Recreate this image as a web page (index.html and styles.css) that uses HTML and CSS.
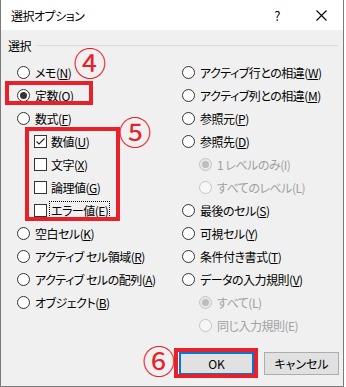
FILE: index.html
```html
<!DOCTYPE html>
<html lang="ja">
<head>
    <meta charset="UTF-8">
    <meta name="viewport" content="width=device-width, initial-scale=1.0">
    <title>選択オプション</title>
    <link rel="stylesheet" href="styles.css">
</head>
<body>
    <div class="dialog">
        <div class="title-bar">
            <span class="title">選択オプション</span>
            <span class="help">?</span>
            <span class="close">
                <svg width="11" height="11" viewBox="0 0 11 11"><path d="M0.5 0.5 L10.5 10.5 M10.5 0.5 L0.5 10.5" stroke="#000" stroke-width="1.1" fill="none"/></svg>
            </span>
        </div>

        <div class="content">
            <div class="group-label">
                <span>選択</span>
                <span class="rule"></span>
            </div>

            <div class="columns">
                <div class="column column-left">
                    <div class="option"><span class="radio"></span><span>メモ(<u>N</u>)</span></div>
                    <div class="option"><span class="radio checked"></span><span>定数(<u>O</u>)</span></div>
                    <div class="option"><span class="radio"></span><span>数式(<u>F</u>)</span></div>
                    <div class="option sub"><span class="checkbox checked"><svg width="11" height="11" viewBox="0 0 11 11"><path d="M1.5 5.5 L4 8 L9.5 2.5" stroke="#222" stroke-width="1.1" fill="none"/></svg></span><span>数値(<u>U</u>)</span></div>
                    <div class="option sub"><span class="checkbox"></span><span>文字(<u>X</u>)</span></div>
                    <div class="option sub"><span class="checkbox"></span><span>論理値(<u>G</u>)</span></div>
                    <div class="option sub"><span class="checkbox"></span><span class="focus">エラー値(<u>E</u>)</span></div>
                    <div class="option"><span class="radio"></span><span>空白セル(<u>K</u>)</span></div>
                    <div class="option"><span class="radio"></span><span>アクティブ セル領域(<u>R</u>)</span></div>
                    <div class="option"><span class="radio"></span><span>アクティブ セルの配列(<u>A</u>)</span></div>
                    <div class="option"><span class="radio"></span><span>オブジェクト(<u>B</u>)</span></div>
                </div>

                <div class="column">
                    <div class="option"><span class="radio"></span><span>アクティブ行との相違(<u>W</u>)</span></div>
                    <div class="option"><span class="radio"></span><span>アクティブ列との相違(<u>M</u>)</span></div>
                    <div class="option"><span class="radio"></span><span>参照元(<u>P</u>)</span></div>
                    <div class="option"><span class="radio"></span><span>参照先(<u>D</u>)</span></div>
                    <div class="option sub disabled"><span class="radio checked"></span><span>1 レベルのみ(I)</span></div>
                    <div class="option sub disabled"><span class="radio"></span><span>すべてのレベル(L)</span></div>
                    <div class="option"><span class="radio"></span><span>最後のセル(<u>S</u>)</span></div>
                    <div class="option"><span class="radio"></span><span>可視セル(<u>Y</u>)</span></div>
                    <div class="option"><span class="radio"></span><span>条件付き書式(<u>T</u>)</span></div>
                    <div class="option"><span class="radio"></span><span>データの入力規則(<u>V</u>)</span></div>
                    <div class="option sub disabled"><span class="radio checked"></span><span>すべて(L)</span></div>
                    <div class="option sub disabled"><span class="radio"></span><span>同じ入力規則(E)</span></div>
                </div>
            </div>

            <div class="buttons">
                <button class="btn btn-ok">OK</button>
                <button class="btn">キャンセル</button>
            </div>
        </div>

        <!-- red annotations drawn over the dialog -->
        <div class="mark-box box-const"></div>
        <div class="mark-box box-types"></div>
        <div class="mark-box box-ok"></div>
        <span class="mark-num num-4">④</span>
        <span class="mark-num num-5">⑤</span>
        <span class="mark-num num-6">⑥</span>
    </div>
</body>
</html>
```

FILE: styles.css
```css
* {
    box-sizing: border-box;
}

body {
    margin: 0;
    background-color: #fff;
    font-family: "Noto Sans CJK JP", "Noto Sans", sans-serif;
    font-size: 12px;
    font-feature-settings: "palt";
    letter-spacing: -0.5px;
    color: #000;
}

.dialog {
    position: relative;
    width: 344px;
    height: 387px;
    border-left: 1px solid #7a7a7a;
    border-right: 1px solid #7a7a7a;
    border-bottom: 1px solid #7a7a7a;
}

/* title bar */
.title-bar {
    display: flex;
    align-items: center;
    height: 30px;
    padding: 0 16px 0 10px;
    background: #fff;
}

.title {
    flex: 1;
}

.help {
    font-size: 13px;
}

.close {
    display: flex;
    margin-left: 36px;
}

/* dialog body */
.content {
    height: 356px;
    padding-top: 7px;
    background-color: #f0f0f0;
}

.group-label {
    display: flex;
    align-items: center;
    gap: 5px;
    height: 16px;
    padding: 0 5px 0 7px;
}

.group-label .rule {
    flex: 1;
    height: 1px;
    background-color: #dcdcdc;
}

.columns {
    display: flex;
    margin-top: 8px;
    padding-left: 16px;
}

.column-left {
    width: 165px;
}

.option {
    display: flex;
    align-items: center;
    height: 23px;
    white-space: nowrap;
}

.option.sub {
    padding-left: 17px;
}

.option.disabled {
    color: #a0a0a0;
}

.radio {
    position: relative;
    flex: none;
    width: 13px;
    height: 13px;
    margin-right: 5px;
    border: 1px solid #333;
    border-radius: 50%;
    background: #fff;
}

.radio.checked::after {
    content: "";
    position: absolute;
    top: 2px;
    left: 2px;
    width: 7px;
    height: 7px;
    border-radius: 50%;
    background: #333;
}

.disabled .radio {
    border-color: #c4c4c4;
    background: #f7f7f7;
}

.disabled .radio.checked {
    background: #e8e8e8;
}

.disabled .radio.checked::after {
    background: #bdbdbd;
}

.checkbox {
    display: flex;
    flex: none;
    width: 13px;
    height: 13px;
    margin-right: 4px;
    border: 1px solid #333;
    background: #fff;
}

.focus {
    padding: 0 1px;
    margin-left: -2px;
    border: 1px dotted #000;
}

/* buttons */
.buttons {
    display: flex;
    justify-content: flex-end;
    gap: 10px;
    margin-top: 15px;
    padding-right: 4px;
}

.btn {
    width: 75px;
    height: 23px;
    padding: 0;
    font: inherit;
    color: #000;
    background-color: #e1e1e1;
    border: 1px solid #adadad;
}

.btn-ok {
    border: 2px solid #0078d7;
}

/* annotations */
.mark-box {
    position: absolute;
    border: 4px solid #e8202a;
}

.box-const {
    left: 4px;
    top: 81px;
    width: 88px;
    height: 24px;
}

.box-types {
    left: 24px;
    top: 127px;
    width: 95px;
    height: 94px;
}

.box-ok {
    left: 173px;
    top: 348px;
    width: 84px;
    height: 30px;
}

.mark-num {
    position: absolute;
    display: flex;
    align-items: center;
    justify-content: center;
    width: 30px;
    height: 30px;
    font-size: 33px;
    line-height: 1;
    letter-spacing: 0;
    color: #e8202a;
}

.num-4 {
    left: 74px;
    top: 47px;
}

.num-5 {
    left: 119px;
    top: 116px;
}

.num-6 {
    left: 143px;
    top: 345px;
}
```
